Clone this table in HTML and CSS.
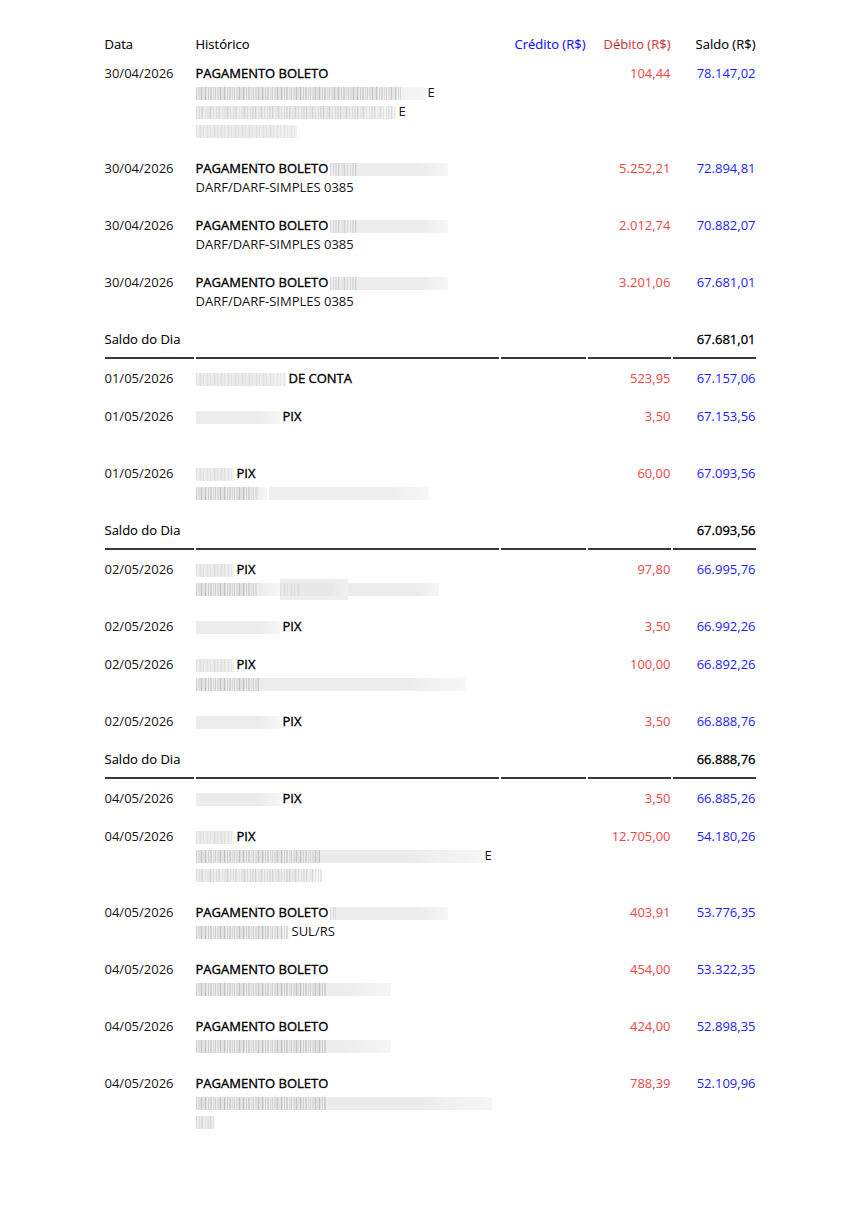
FILE: index.html
```html
<!DOCTYPE html>
<html lang="pt-BR">
<head>
<meta charset="utf-8">
<title>Extrato</title>
<link rel="stylesheet" href="styles.css">
</head>
<body>
<div class="page">
<table class="extrato">
  <colgroup>
    <col class="c-data"><col class="c-hist"><col class="c-cred"><col class="c-deb"><col class="c-sal">
  </colgroup>
  <thead>
    <tr>
      <th>Data</th>
      <th>Histórico</th>
      <th class="num cred">Crédito (R$)</th>
      <th class="num deb">Débito (R$)</th>
      <th class="num">Saldo (R$)</th>
    </tr>
  </thead>
  <tbody>
    <tr>
      <td>30/04/2026</td>
      <td>
        <div class="main">PAGAMENTO BOLETO</div>
        <div><span class="blur dk" style="width:229px;--s:205px"></span>E</div>
        <div><span class="blur" style="width:200px;--s:200px"></span>E</div>
        <div><span class="blur lt" style="width:101px;--s:101px"></span></div>
      </td>
      <td></td>
      <td class="num deb">104,44</td>
      <td class="num sal">78.147,02</td>
    </tr>
    <tr>
      <td>30/04/2026</td>
      <td>
        <div class="main">PAGAMENTO BOLETO<span class="blur after" style="width:118px;--s:28px"></span></div>
        <div>DARF/DARF-SIMPLES 0385</div>
      </td>
      <td></td>
      <td class="num deb">5.252,21</td>
      <td class="num sal">72.894,81</td>
    </tr>
    <tr>
      <td>30/04/2026</td>
      <td>
        <div class="main">PAGAMENTO BOLETO<span class="blur after" style="width:118px;--s:28px"></span></div>
        <div>DARF/DARF-SIMPLES 0385</div>
      </td>
      <td></td>
      <td class="num deb">2.012,74</td>
      <td class="num sal">70.882,07</td>
    </tr>
    <tr>
      <td>30/04/2026</td>
      <td>
        <div class="main">PAGAMENTO BOLETO<span class="blur after" style="width:118px;--s:28px"></span></div>
        <div>DARF/DARF-SIMPLES 0385</div>
      </td>
      <td></td>
      <td class="num deb">3.201,06</td>
      <td class="num sal">67.681,01</td>
    </tr>
    <tr class="saldo-dia">
      <td>Saldo do Dia</td>
      <td></td>
      <td></td>
      <td></td>
      <td class="num total">67.681,01</td>
    </tr>
    <tr>
      <td>01/05/2026</td>
      <td><div class="main"><span class="blur lt" style="width:90px;--s:90px"></span>DE CONTA</div></td>
      <td></td>
      <td class="num deb">523,95</td>
      <td class="num sal">67.157,06</td>
    </tr>
    <tr>
      <td>01/05/2026</td>
      <td>
        <div class="main"><span class="blur" style="width:84px;--s:0px"></span>PIX</div>
        <div>&nbsp;</div>
      </td>
      <td></td>
      <td class="num deb">3,50</td>
      <td class="num sal">67.153,56</td>
    </tr>
    <tr>
      <td>01/05/2026</td>
      <td>
        <div class="main"><span class="blur lt" style="width:38px;--s:38px"></span>PIX</div>
        <div><span class="blur dk" style="width:71px;--s:62px"></span><span class="blur gap" style="width:160px;--s:0px"></span></div>
      </td>
      <td></td>
      <td class="num deb">60,00</td>
      <td class="num sal">67.093,56</td>
    </tr>
    <tr class="saldo-dia">
      <td>Saldo do Dia</td>
      <td></td>
      <td></td>
      <td></td>
      <td class="num total">67.093,56</td>
    </tr>
    <tr>
      <td>02/05/2026</td>
      <td>
        <div class="main"><span class="blur lt" style="width:38px;--s:38px"></span>PIX</div>
        <div><span class="blur dk" style="width:84px;--s:61px"></span><span class="blur lt tall" style="width:68px;--s:20px"></span><span class="blur" style="width:91px;--s:0px"></span></div>
      </td>
      <td></td>
      <td class="num deb">97,80</td>
      <td class="num sal">66.995,76</td>
    </tr>
    <tr>
      <td>02/05/2026</td>
      <td><div class="main"><span class="blur" style="width:84px;--s:0px"></span>PIX</div></td>
      <td></td>
      <td class="num deb">3,50</td>
      <td class="num sal">66.992,26</td>
    </tr>
    <tr>
      <td>02/05/2026</td>
      <td>
        <div class="main"><span class="blur lt" style="width:38px;--s:38px"></span>PIX</div>
        <div><span class="blur dk" style="width:269px;--s:63px"></span></div>
      </td>
      <td></td>
      <td class="num deb">100,00</td>
      <td class="num sal">66.892,26</td>
    </tr>
    <tr>
      <td>02/05/2026</td>
      <td><div class="main"><span class="blur" style="width:84px;--s:0px"></span>PIX</div></td>
      <td></td>
      <td class="num deb">3,50</td>
      <td class="num sal">66.888,76</td>
    </tr>
    <tr class="saldo-dia">
      <td>Saldo do Dia</td>
      <td></td>
      <td></td>
      <td></td>
      <td class="num total">66.888,76</td>
    </tr>
    <tr>
      <td>04/05/2026</td>
      <td><div class="main"><span class="blur" style="width:84px;--s:0px"></span>PIX</div></td>
      <td></td>
      <td class="num deb">3,50</td>
      <td class="num sal">66.885,26</td>
    </tr>
    <tr>
      <td>04/05/2026</td>
      <td>
        <div class="main"><span class="blur lt" style="width:38px;--s:38px"></span>PIX</div>
        <div><span class="blur dk" style="width:286px;--s:124px"></span>E</div>
        <div><span class="blur" style="width:126px;--s:126px"></span></div>
      </td>
      <td></td>
      <td class="num deb">12.705,00</td>
      <td class="num sal">54.180,26</td>
    </tr>
    <tr>
      <td>04/05/2026</td>
      <td>
        <div class="main">PAGAMENTO BOLETO<span class="blur after" style="width:118px;--s:6px"></span></div>
        <div><span class="blur dk" style="width:93px;--s:93px"></span>SUL/RS</div>
      </td>
      <td></td>
      <td class="num deb">403,91</td>
      <td class="num sal">53.776,35</td>
    </tr>
    <tr>
      <td>04/05/2026</td>
      <td>
        <div class="main">PAGAMENTO BOLETO</div>
        <div><span class="blur dk" style="width:195px;--s:131px"></span></div>
      </td>
      <td></td>
      <td class="num deb">454,00</td>
      <td class="num sal">53.322,35</td>
    </tr>
    <tr>
      <td>04/05/2026</td>
      <td>
        <div class="main">PAGAMENTO BOLETO</div>
        <div><span class="blur dk" style="width:195px;--s:131px"></span></div>
      </td>
      <td></td>
      <td class="num deb">424,00</td>
      <td class="num sal">52.898,35</td>
    </tr>
    <tr>
      <td>04/05/2026</td>
      <td>
        <div class="main">PAGAMENTO BOLETO</div>
        <div><span class="blur dk" style="width:296px;--s:131px"></span></div>
        <div><span class="blur" style="width:19px;--s:19px"></span></div>
      </td>
      <td></td>
      <td class="num deb">788,39</td>
      <td class="num sal">52.109,96</td>
    </tr>
  </tbody>
</table>
</div>
</body>
</html>
```

FILE: styles.css
```css
html, body {
  margin: 0;
  padding: 0;
  background: #ffffff;
}

body {
  font-family: "Open Sans", "Noto Sans", "Liberation Sans", sans-serif;
  font-size: 13px;
  line-height: 19px;
  color: #141414;
}

.page {
  padding-top: 25px;
}

.extrato {
  width: 655px;
  margin: 0 auto;
  border-collapse: separate;
  border-spacing: 2px 0;
  table-layout: fixed;
}

.c-data { width: 89px; }
.c-hist { width: 303px; }
.c-cred { width: 85px; }
.c-deb  { width: 83px; }
.c-sal  { width: 83px; }

.extrato th {
  font-weight: 400;
  text-align: left;
  padding: 10px 0 0;
  white-space: nowrap;
  color: #000;
  -webkit-text-stroke: 0.1px #000;
}

.extrato td {
  padding: 10px 0 9px;
  vertical-align: top;
  white-space: nowrap;
}

.extrato .num {
  text-align: right;
}

.cred { color: #1010ff !important; -webkit-text-stroke: 0.1px #1010ff !important; }
.deb  { color: #f04646 !important; }
.sal  { color: #1c1cff; }
.total { color: #000; -webkit-text-stroke: 0.3px #000; }

.main {
  color: #000;
  -webkit-text-stroke: 0.35px #000;
}

.saldo-dia td {
  padding: 10px 0 8px;
  border-bottom: 2px solid #383838;
}

.saldo-dia td:first-child {
  color: #000;
  -webkit-text-stroke: 0.1px #000;
}

/* blurred (redacted) text blocks */
.blur {
  display: inline-block;
  height: 13px;
  vertical-align: -3px;
  margin-right: 3px;
  background-color: #ececec;
  background-image:
    repeating-linear-gradient(90deg,
      rgba(120,120,120,.22) 0,
      rgba(120,120,120,0) 1.5px,
      rgba(120,120,120,0) 2.5px,
      rgba(120,120,120,.14) 3.5px,
      rgba(120,120,120,0) 4.5px,
      rgba(120,120,120,.20) 6px,
      rgba(120,120,120,0) 7.5px,
      rgba(120,120,120,0) 8.5px),
    linear-gradient(90deg, rgba(255,255,255,0) 75%, rgba(255,255,255,.55));
  background-size: var(--s, 0px) 100%, 100% 100%;
  background-repeat: no-repeat;
}

.blur.dk {
  background-image:
    repeating-linear-gradient(90deg,
      rgba(100,100,100,.30) 0,
      rgba(100,100,100,0) 1.5px,
      rgba(100,100,100,0) 2px,
      rgba(100,100,100,.22) 3px,
      rgba(100,100,100,0) 4px,
      rgba(100,100,100,.28) 5.5px,
      rgba(100,100,100,0) 7px,
      rgba(100,100,100,.12) 8px,
      rgba(100,100,100,0) 9.5px),
    linear-gradient(90deg, rgba(255,255,255,0) 75%, rgba(255,255,255,.55));
}

.blur.lt {
  background-image:
    repeating-linear-gradient(90deg,
      rgba(130,130,130,.14) 0,
      rgba(130,130,130,0) 1.5px,
      rgba(130,130,130,0) 3px,
      rgba(130,130,130,.10) 4.5px,
      rgba(130,130,130,0) 6px,
      rgba(130,130,130,0) 7px),
    linear-gradient(90deg, rgba(255,255,255,0) 75%, rgba(255,255,255,.4));
}

.blur.after {
  margin-left: 2px;
  margin-right: 0;
}

.blur.gap {
  margin-left: -1px;
  background-color: #eeeeee;
}

.blur.tall {
  margin-left: -3px;
  margin-right: 0;
  background-color: #e8e8e8;
  box-shadow: 0 -4px 0 #eeeeee, 0 4px 0 #eeeeee;
}
```
